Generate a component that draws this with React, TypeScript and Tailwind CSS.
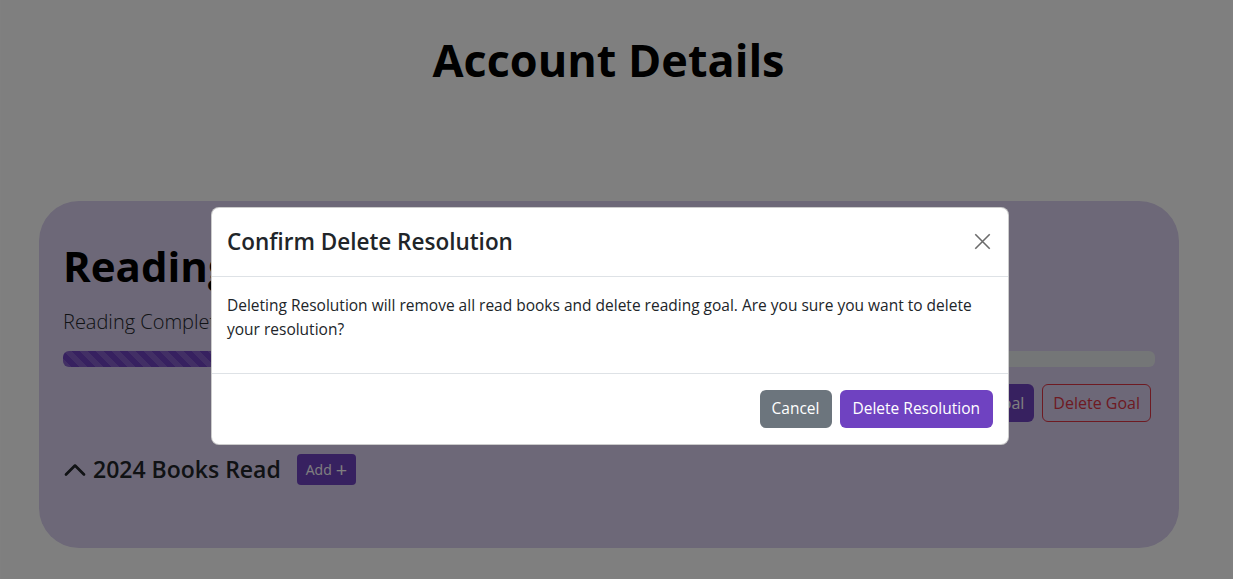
import * as React from "react";

const font = { fontFamily: '"Open Sans", "Noto Sans", sans-serif' };

function ChevronUp() {
  return (
    <svg width="24" height="24" viewBox="0 0 16 16" fill="currentColor">
      <path
        fillRule="evenodd"
        d="M7.646 4.646a.5.5 0 0 1 .708 0l6 6a.5.5 0 0 1-.708.708L8 5.707l-5.646 5.647a.5.5 0 0 1-.708-.708l6-6z"
        stroke="currentColor"
        strokeWidth="0.8"
      />
    </svg>
  );
}

function CloseIcon() {
  return (
    <svg width="17" height="17" viewBox="0 0 16 16" fill="none" stroke="#6b6b6b" strokeWidth="1.5">
      <path d="M1.2 1.2l13.6 13.6M14.8 1.2L1.2 14.8" />
    </svg>
  );
}

export default function App() {
  return (
    <div
      style={font}
      className="relative h-[579px] w-full overflow-hidden border-l border-r-2 border-[#808080] bg-white text-[#212529]"
    >
      {/* page underneath */}
      <div className="flex flex-col">
        <h1 className="pr-[15px] pt-[33px] text-center text-[45px] font-bold leading-[1.2] text-black">
          Account Details
        </h1>

        <div className="ml-[38px] mt-[114px] h-[347px] w-[1140px] rounded-[40px] bg-[#dad0f0] px-[24px] pt-[40px]">
          <h2 className="text-[42px] font-bold leading-[1.2] text-black">Reading Goal</h2>
          <p className="mt-[16px] text-[20px] font-light text-[#212529]">Reading Completed: 4 of 12 books</p>
          <div className="mt-[14px] flex h-[16px] overflow-hidden rounded-[6px] bg-[#e9ecef]">
            <div className="h-full w-[30%] bg-[#6f42c1] bg-[linear-gradient(45deg,rgba(255,255,255,.15)_25%,transparent_25%,transparent_50%,rgba(255,255,255,.15)_50%,rgba(255,255,255,.15)_75%,transparent_75%,transparent)] bg-[length:16px_16px]" />
          </div>
          <div className="mt-[17px] flex justify-end gap-[8px] pr-[4px]">
            <button className="h-[38px] rounded-[6px] bg-[#6f42c1] px-[10px] text-[16px] text-white">
              Edit Goal
            </button>
            <button className="h-[38px] rounded-[6px] border border-[#dc3545] px-[10px] text-[16px] text-[#dc3545]">
              Delete Goal
            </button>
          </div>
          <div className="mt-[30px] flex items-center gap-[16px]">
            <div className="flex items-center gap-[6px] text-[23px] font-semibold">
              <ChevronUp />
              <span>2024 Books Read</span>
            </div>
            <button className="flex h-[31px] items-center gap-[4px] rounded-[4px] bg-[#6f42c1] px-[9px] text-[14px] text-white">
              Add <span className="text-[20px] leading-none">+</span>
            </button>
          </div>
        </div>
      </div>

      {/* backdrop */}
      <div className="absolute inset-0 bg-black/50" />

      {/* modal */}
      <div className="absolute left-[210px] top-[207px] w-[798px] rounded-[8px] border border-black/20 bg-white">
        <div className="flex items-center justify-between border-b border-[#dee2e6] px-[15px] py-[17px]">
          <h5 className="text-[22.5px] font-semibold leading-[1.5] text-[#212529]">Confirm Delete Resolution</h5>
          <button className="mr-[1px] p-[1px]">
            <CloseIcon />
          </button>
        </div>
        <div className="border-b border-[#dee2e6] px-[15px] pb-[32px] pt-[16px] text-[15.5px] leading-[24px]">
          Deleting Resolution will remove all read books and delete reading goal. Are you sure you want to delete your
          resolution?
        </div>
        <div className="flex justify-end gap-[8px] px-[15px] py-[16px]">
          <button className="h-[38px] rounded-[6px] bg-[#6c757d] px-[12px] text-[15.5px] text-white">Cancel</button>
          <button className="h-[38px] rounded-[6px] bg-[#6f42c1] px-[13px] text-[15.5px] text-white">
            Delete Resolution
          </button>
        </div>
      </div>
    </div>
  );
}
